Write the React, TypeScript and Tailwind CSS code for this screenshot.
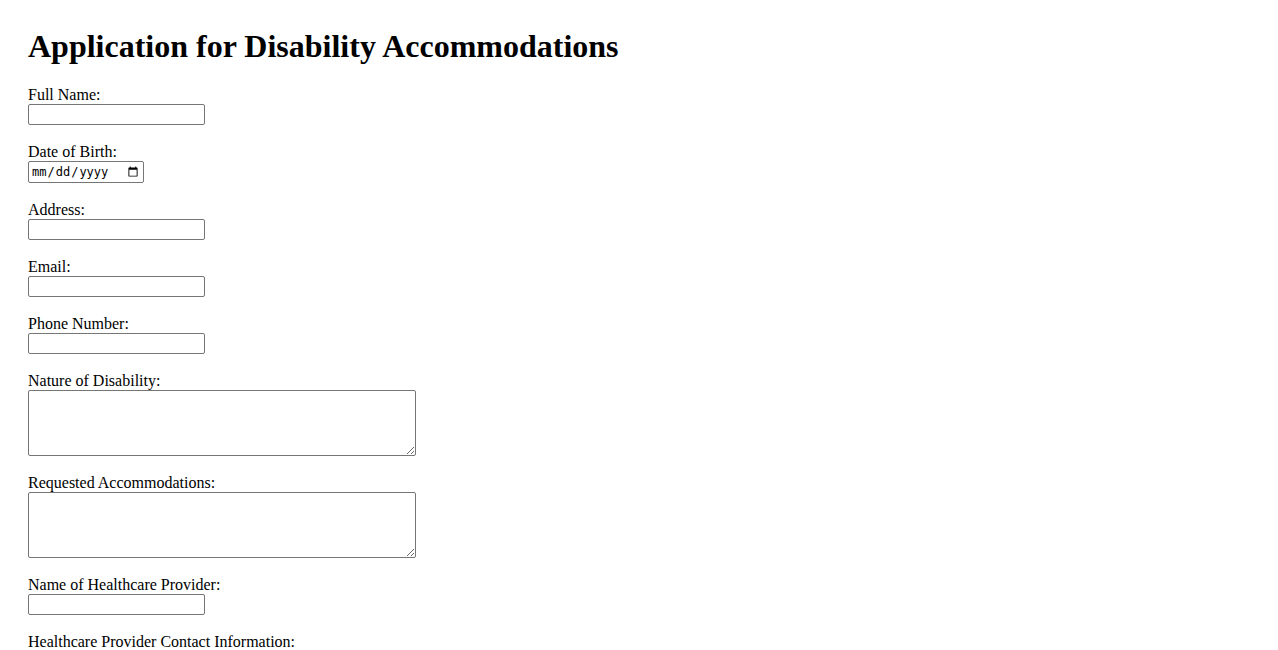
import { useState } from "react";

type Field = {
  id: string;
  label: string;
  kind: "text" | "date" | "email" | "tel" | "textarea";
};

const fields: Field[] = [
  { id: "fullName", label: "Full Name:", kind: "text" },
  { id: "dob", label: "Date of Birth:", kind: "date" },
  { id: "address", label: "Address:", kind: "text" },
  { id: "email", label: "Email:", kind: "email" },
  { id: "phone", label: "Phone Number:", kind: "tel" },
  { id: "disability", label: "Nature of Disability:", kind: "textarea" },
  { id: "accommodations", label: "Requested Accommodations:", kind: "textarea" },
  { id: "provider", label: "Name of Healthcare Provider:", kind: "text" },
  { id: "providerContact", label: "Healthcare Provider Contact Information:", kind: "text" },
];

const boxClass =
  "block border border-[#767676] rounded-[2px] bg-white text-black outline-none";

export default function App() {
  const [values, setValues] = useState<Record<string, string>>({});

  const update = (id: string, value: string) =>
    setValues((v) => ({ ...v, [id]: value }));

  return (
    <div className="min-h-screen bg-white px-[28px] pt-[28px] pb-8 font-['Liberation_Serif','Times_New_Roman',serif] text-black">
      <h1 className="mb-[22px] text-[32px] font-bold leading-[36px]">
        Application for Disability Accommodations
      </h1>

      <form className="flex flex-col items-start" onSubmit={(e) => e.preventDefault()}>
        {fields.map((field) => (
          <div key={field.id} className="mb-[18px] flex flex-col items-start">
            <label htmlFor={field.id} className="block text-base leading-[18px]">
              {field.label}
            </label>
            {field.kind === "textarea" ? (
              <textarea
                id={field.id}
                value={values[field.id] ?? ""}
                onChange={(e) => update(field.id, e.target.value)}
                className={`${boxClass} h-[66px] w-[388px] resize p-[2px] font-['Liberation_Mono',monospace] text-[13px]`}
              />
            ) : field.kind === "date" ? (
              <input
                id={field.id}
                type="date"
                value={values[field.id] ?? ""}
                onChange={(e) => update(field.id, e.target.value)}
                className={`${boxClass} h-[22px] w-[116px] px-[2px] font-['DejaVu_Sans_Mono',monospace] text-[12px]`}
              />
            ) : (
              <input
                id={field.id}
                type={field.kind}
                value={values[field.id] ?? ""}
                onChange={(e) => update(field.id, e.target.value)}
                className={`${boxClass} h-[21px] w-[177px] px-[2px] font-['Liberation_Sans',Arial,sans-serif] text-[13px]`}
              />
            )}
          </div>
        ))}
      </form>
    </div>
  );
}
